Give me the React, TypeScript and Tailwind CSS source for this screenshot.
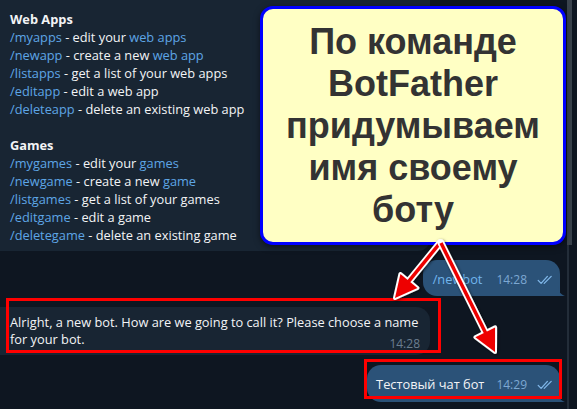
import React from 'react';

// Telegram chat with BotFather + yellow annotation callout and red arrows
const link = 'text-[#5ea6e6]';

const Checks: React.FC = () => (
  <svg width="16" height="10" viewBox="0 0 16 10" className="shrink-0">
    <path
      d="M1.2 5.4l2.9 3L10.4 1.4M7.2 8.4l7-7"
      fill="none"
      stroke="#7fb6e8"
      strokeWidth="1.3"
      strokeLinecap="round"
      strokeLinejoin="round"
    />
  </svg>
);

const OutTail: React.FC = () => (
  <svg width="8" height="10" viewBox="0 0 8 10" className="absolute right-[-6px] bottom-0">
    <path d="M0 0 C0 5 2 8 7 10 L0 10 Z" fill="#2b5278" />
  </svg>
);

const Cmd: React.FC<{ cmd: string; children: React.ReactNode }> = ({ cmd, children }) => (
  <div>
    <span className={link}>{cmd}</span> - {children}
  </div>
);

const Arrow: React.FC<{ from: [number, number]; to: [number, number] }> = ({ from, to }) => {
  const dx = to[0] - from[0];
  const dy = to[1] - from[1];
  const len = Math.hypot(dx, dy);
  const ux = dx / len;
  const uy = dy / len;
  const head = 22;
  const half = 11;
  const bx = to[0] - ux * head;
  const by = to[1] - uy * head;
  const px = -uy;
  const py = ux;
  const pts = `${to[0]},${to[1]} ${bx + px * half},${by + py * half} ${bx - px * half},${by - py * half}`;
  return (
    <g>
      <line x1={from[0]} y1={from[1]} x2={bx} y2={by} stroke="#ffffff" strokeWidth="7" strokeLinecap="round" />
      <polygon points={pts} fill="#ffffff" stroke="#ffffff" strokeWidth="4" strokeLinejoin="round" />
      <line x1={from[0]} y1={from[1]} x2={bx + ux * 2} y2={by + uy * 2} stroke="#ee0000" strokeWidth="3.5" />
      <polygon points={pts} fill="#ee0000" />
    </g>
  );
};

export default function App() {
  return (
    <div
      className="relative w-[577px] h-[409px] overflow-hidden bg-[#0e1621] text-[12.8px] text-[#f3f4f6]"
      style={{ fontFamily: '"Open Sans", "Noto Sans", sans-serif' }}
    >
      <div className="flex flex-col">
        {/* BotFather command list */}
        <div className="w-[430px] rounded-br-[12px] bg-[#182533] pl-[10px] pt-[10px] pb-[7px] leading-[18px]">
          <div className="font-bold">Web Apps</div>
          <Cmd cmd="/myapps">
            edit your <span className={link}>web apps</span>
          </Cmd>
          <Cmd cmd="/newapp">
            create a new <span className={link}>web app</span>
          </Cmd>
          <Cmd cmd="/listapps">get a list of your web apps</Cmd>
          <Cmd cmd="/editapp">edit a web app</Cmd>
          <Cmd cmd="/deleteapp">delete an existing web app</Cmd>
          <div className="h-[18px]" />
          <div className="font-bold">Games</div>
          <Cmd cmd="/mygames">
            edit your <span className={link}>games</span>
          </Cmd>
          <Cmd cmd="/newgame">
            create a new <span className={link}>game</span>
          </Cmd>
          <Cmd cmd="/listgames">get a list of your games</Cmd>
          <Cmd cmd="/editgame">edit a game</Cmd>
          <Cmd cmd="/deletegame">delete an existing game</Cmd>
        </div>

        {/* /newbot */}
        <div className="relative mt-[9px] mr-[17px] self-end flex items-center rounded-[14px] rounded-br-none bg-[#2b5278] pl-[10px] pr-[7px] pt-[8px] pb-[7px] leading-[18px]">
          <span className="text-[#72b6ee]">/newbot</span>
          <span className="ml-[14px] mt-[3px] text-[12px] text-[#7da8d3]">14:28</span>
          <span className="ml-[10px] mt-[3px]">
            <Checks />
          </span>
          <OutTail />
        </div>

        {/* bot reply */}
        <div className="mt-[11px] w-[430px] rounded-r-[14px] bg-[#182533] pl-[10px] pr-[10px] pt-[7px] pb-[7px] leading-[17px] whitespace-nowrap">
          <div>Alright, a new bot. How are we going to call it? Please choose a name</div>
          <div className="flex items-end justify-between">
            <span>for your bot.</span>
            <span className="mb-[-4px] text-[12px] text-[#6c7e90]">14:28</span>
          </div>
        </div>

        {/* user name */}
        <div className="relative mt-[10px] mr-[17px] self-end flex items-center rounded-[14px] rounded-br-none bg-[#2b5278] pl-[9px] pr-[7px] pt-[8px] pb-[8px] leading-[18px]">
          <span>Тестовый чат бот</span>
          <span className="ml-[12px] mt-[3px] text-[12px] text-[#7da8d3]">14:29</span>
          <span className="ml-[10px] mt-[3px]">
            <Checks />
          </span>
          <OutTail />
        </div>

        <div className="mt-[8px] h-[30px] w-[420px] rounded-tr-[14px] rounded-tl-[6px] bg-[#182533]" />
      </div>

      {/* scrollbar */}
      <div className="absolute right-[5px] top-0 h-[245px] w-[5px] bg-[#3a434d]" />
      <div className="absolute right-[8px] top-[245px] bottom-0 w-[2px] bg-[#232d39]" />

      {/* annotation callout */}
      <div
        className="absolute left-[260px] top-[6px] w-[306px] h-[239px] rounded-[13px] border-[3px] border-[#0000ff] bg-[#ffffc4] flex flex-col items-center justify-center text-[36px] font-bold leading-[42px] text-[#333333] shadow-[0_2px_6px_rgba(0,0,0,0.5)]"
        style={{ fontFamily: '"Liberation Sans", Arial, sans-serif' }}
      >
        <div>По команде</div>
        <div>BotFather</div>
        <div>придумываем</div>
        <div>имя своему</div>
        <div>боту</div>
      </div>

      {/* red highlight frames */}
      <div className="absolute left-[6px] top-[298px] w-[435px] h-[55px] border-[3px] border-[#ff0000]" />
      <div className="absolute left-[364px] top-[359px] w-[198px] h-[40px] border-[3px] border-[#ff0000]" />

      <svg className="absolute inset-0 pointer-events-none" width="577" height="409" viewBox="0 0 577 409">
        <defs>
          <filter id="sh" x="-20%" y="-20%" width="140%" height="140%">
            <feDropShadow dx="1" dy="1" stdDeviation="1.5" floodColor="#000" floodOpacity="0.6" />
          </filter>
        </defs>
        <g filter="url(#sh)">
          <Arrow from={[440, 243]} to={[395, 298]} />
          <Arrow from={[441, 243]} to={[495, 352]} />
        </g>
      </svg>
    </div>
  );
}
